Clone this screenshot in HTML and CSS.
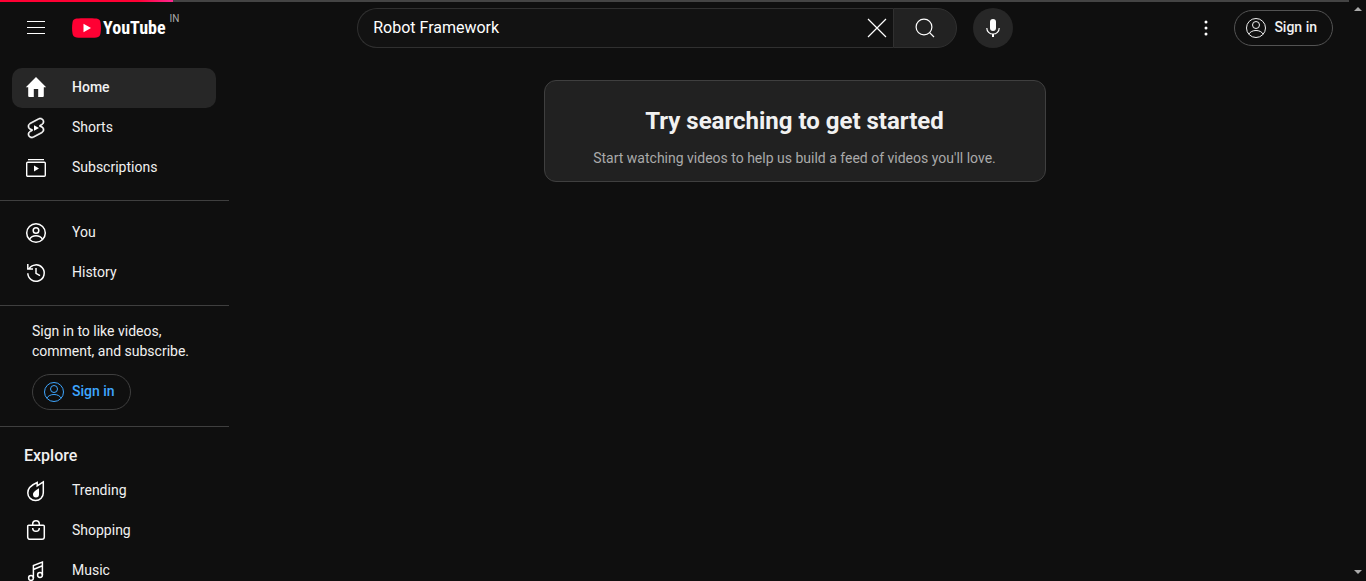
FILE: index.html
```html
<!DOCTYPE html>
<html lang="en">
<head>
<meta charset="utf-8">
<title>YouTube</title>
<link rel="stylesheet" href="styles.css">
</head>
<body>
<svg class="symbols" aria-hidden="true">
  <symbol id="person" viewBox="0 0 24 24"><g fill="none" stroke="currentColor"><circle cx="12" cy="12" r="9.5"/><circle cx="12" cy="9" r="3.5"/><path d="M4.8 18.2C6.2 15.700 8.900 14.500 12 14.500s5.800 1.200 7.200 3.700"/></g></symbol>
</svg>
<div class="progress"><div class="progress-value"></div></div>
<div class="page">
  <header class="masthead">
    <div class="start">
      <button class="icon-button" aria-label="Guide"><svg class="icon" viewBox="0 0 24 24"><path d="M21 6H3V5h18v1zm0 5H3v1h18v-1zm0 6H3v1h18v-1z"/></svg></button>
      <a class="logo" href="#"><svg class="logo-mark" viewBox="0 0 29 20"><path fill="#f03" d="M4.500.6C9 0 20 0 24.500.6c2.400.3 3.700 1.500 4 3.900.6 3.500.6 7.500 0 11-.3 2.400-1.600 3.600-4 3.900-4.500.6-15.500.6-20 0-2.400-.3-3.700-1.500-4-3.900-.6-3.500-.6-7.500 0-11C.8 2.100 2.100.9 4.500.6z"/><path fill="#fff" d="M11.500 5.700v8.600L19 10z"/></svg><span class="wordmark">YouTube</span><span class="country">IN</span></a>
    </div>
    <form class="search">
      <div class="search-box">
        <input class="search-input" type="text" aria-label="Search" value="Robot Framework">
        <button class="clear" type="button" aria-label="Clear"><svg class="icon" viewBox="0 0 24 24"><path fill="none" stroke="currentColor" stroke-width="1.200" d="M3 3l18 18M21 3 3 21"/></svg></button>
      </div>
      <button class="search-button" type="button" aria-label="Search"><svg class="icon" viewBox="0 0 24 24"><g fill="none" stroke="currentColor" stroke-width="1.200"><circle cx="11" cy="11" r="7.900"/><path d="M16.600 16.600 21 21"/></g></svg></button>
      <button class="mic" type="button" aria-label="Search with your voice"><svg class="icon" viewBox="0 0 24 24"><rect x="9" y="3" width="6" height="12" rx="3"/><path fill="none" stroke="currentColor" stroke-width="1.200" d="M5.800 12c0 3.500 2.700 6 6.200 6s6.200-2.500 6.200-6"/><path d="M11 18h2v3h-2z"/></svg></button>
    </form>
    <div class="end">
      <button class="icon-button" aria-label="Settings"><svg class="icon" viewBox="0 0 24 24"><circle cx="12" cy="6" r="1.500"/><circle cx="12" cy="12" r="1.500"/><circle cx="12" cy="18" r="1.500"/></svg></button>
      <a class="sign-in" href="#"><svg class="icon"><use href="#person"/></svg>Sign in</a>
    </div>
  </header>
  <div class="content">
    <nav class="guide">
      <div class="section">
        <a class="entry active" href="#"><svg class="icon" viewBox="0 0 24 24"><path d="M12 1 1.800 11.200h2.400V20a1 1 0 0 0 1 1h4.600v-8h4.400v8h4.600a1 1 0 0 0 1-1v-8.800h2.400z"/></svg>Home</a>
        <a class="entry" href="#"><svg class="icon" viewBox="0 0 24 24"><path d="M10 14.650v-5.300L15 12l-5 2.650z"/><path d="M17.770 10.320l-1.200-.5L18 9.060c1.840-.96 2.530-3.230 1.560-5.060s-3.240-2.530-5.070-1.560L6 6.940c-1.290.68-2.070 2.040-2 3.490.07 1.420.93 2.670 2.220 3.250.03.01 1.200.5 1.200.5L6 14.930c-1.830.97-2.530 3.240-1.560 5.070.97 1.830 3.240 2.530 5.070 1.560l8.500-4.500c1.290-.68 2.060-2.040 1.990-3.490-.07-1.420-.94-2.680-2.230-3.250zm-.23 5.860-8.500 4.500c-1.340.71-3.010.2-3.720-1.140-.71-1.340-.2-3.010 1.140-3.720l2.040-1.080v-1.210l-.69-.28-1.110-.46c-.99-.41-1.650-1.350-1.700-2.410-.05-1.060.52-2.060 1.460-2.560l8.500-4.500c1.340-.71 3.010-.2 3.720 1.140.71 1.340.2 3.010-1.140 3.720L15.500 9.260v1.210l1.800.74c.99.41 1.650 1.350 1.700 2.410.05 1.060-.52 2.060-1.460 2.560z" stroke="currentColor" stroke-width=".7"/></svg>Shorts</a>
        <a class="entry" href="#"><svg class="icon" viewBox="0 0 24 24"><path d="M4 3h16v1.200H4zM10 9.500v6l5-3z"/><rect x="2.700" y="6.200" width="18.600" height="14" rx="1" fill="none" stroke="currentColor" stroke-width="1.400"/></svg>Subscriptions</a>
      </div>
      <div class="section">
        <a class="entry" href="#"><svg class="icon" viewBox="0 0 24 24"><g fill="none" stroke="currentColor" stroke-width="1.500"><circle cx="12" cy="12" r="9.300"/><circle cx="12" cy="9.500" r="2.800"/><path d="M5.500 18.300c1.300-2.300 3.600-3.500 6.500-3.500s5.200 1.200 6.500 3.500"/></g></svg>You</a>
        <a class="entry" href="#"><svg class="icon" viewBox="0 0 24 24"><g fill="none" stroke="currentColor" stroke-width="1.500"><path d="M5 7.800A8.200 8.200 0 1 1 3.800 12.300M3.800 3v5h5.200M12 7v5.300l4 2.400"/></g></svg>History</a>
      </div>
      <div class="section promo">
        <p class="promo-text">Sign in to like videos, comment, and subscribe.</p>
        <a class="sign-in blue" href="#"><svg class="icon"><use href="#person"/></svg>Sign in</a>
      </div>
      <div class="section">
        <h3 class="section-title">Explore</h3>
        <a class="entry" href="#"><svg class="icon" viewBox="0 0 24 24"><path fill="none" stroke="currentColor" stroke-width="1.500" d="M19.300 2.800v10.900a7.700 7.700 0 0 1-15.500.2c0-4.500 3.200-7.800 9.400-10.400v3.300z"/><path d="M15 9.200v6.300a3 3 0 1 1-6 0c0-3 2.700-3.800 6-6.300z"/></svg>Trending</a>
        <a class="entry" href="#"><svg class="icon" viewBox="0 0 24 24"><g fill="none" stroke="currentColor" stroke-width="1.500"><path d="M4.700 6.300h14.600a1 1 0 0 1 1 1V18a2.300 2.300 0 0 1-2.300 2.300H6A2.300 2.300 0 0 1 3.700 18V7.300a1 1 0 0 1 1-1zM8.700 6V5a3.300 3.300 0 0 1 6.600 0v1M8.700 9a3.300 3.300 0 0 0 6.600 0"/></g></svg>Shopping</a>
        <a class="entry" href="#"><svg class="icon" viewBox="0 0 24 24"><g fill="none" stroke="currentColor" stroke-width="1.500"><circle cx="7" cy="19" r="2.400"/><circle cx="16" cy="16" r="2.400"/><path d="M9.400 19V6.500l9-3.500v13M9.400 10.500l9-3.700"/></g></svg>Music</a>
      </div>
    </nav>
    <main class="feed">
      <section class="nudge">
        <h1 class="nudge-title">Try searching to get started</h1>
        <p class="nudge-text">Start watching videos to help us build a feed of videos you'll love.</p>
      </section>
    </main>
  </div>
</div>
<div class="scrollbar" aria-hidden="true"><span class="arrow up"></span><span class="arrow down"></span></div>
</body>
</html>
```
FILE: styles.css
```css
* { box-sizing: border-box; }

body {
  margin: 0;
  height: 100vh;
  overflow: hidden;
  display: flex;
  background: #0f0f0f;
  color: #f1f1f1;
  font-family: Roboto, "Liberation Sans", sans-serif;
  font-size: 14px;
  line-height: 20px;
}

h1, h3, p { margin: 0; }
a { color: inherit; text-decoration: none; }

button {
  display: flex;
  align-items: center;
  justify-content: center;
  padding: 0;
  border: 0;
  background: none;
  color: #fff;
}

.symbols { position: absolute; width: 0; height: 0; }
.icon { width: 24px; height: 24px; flex: none; fill: currentColor; color: inherit; }

.progress {
  position: absolute;
  top: 0;
  left: 0;
  right: 17px;
  height: 2px;
  background: #444;
}
.progress-value {
  width: 173px;
  height: 2px;
  background: linear-gradient(to right, #f03 80%, #ff2791 100%);
}

.page { flex: 1; min-width: 0; display: flex; flex-direction: column; }

.masthead {
  flex: none;
  height: 56px;
  padding: 0 16px;
  display: flex;
  align-items: center;
  justify-content: space-between;
}
.start, .end { display: flex; align-items: center; }
.start { width: 168px; }
.icon-button { flex: none; width: 40px; height: 40px; }

.logo { display: flex; align-items: center; padding-left: 16px; gap: 2px; }
.logo-mark { width: 29px; height: 20px; flex: none; }
.wordmark {
  font-family: "Roboto Condensed", "Liberation Sans Narrow", Roboto, sans-serif;
  font-size: 18px;
  font-weight: 700;
  color: #fff;
}
.country { align-self: flex-start; font-size: 10px; line-height: 10px; color: #aaa; margin: -4px 0 0 2px; }

.search { display: flex; width: 656px; height: 40px; margin: 0; }
.search-box {
  flex: 1;
  min-width: 0;
  display: flex;
  align-items: center;
  padding: 0 4px 0 15px;
  border: 1px solid #303030;
  border-right: 0;
  border-radius: 20px 0 0 20px;
  background: #121212;
}
.search-input {
  flex: 1;
  min-width: 0;
  padding: 0;
  border: 0;
  outline: 0;
  background: none;
  color: #fff;
  font: 16px/24px Roboto, "Liberation Sans", sans-serif;
}
.clear { width: 24px; height: 24px; }
.search-button {
  width: 64px;
  border: 1px solid #303030;
  border-radius: 0 20px 20px 0;
  background: #222;
}
.mic { width: 40px; height: 40px; margin-left: 16px; border-radius: 50%; background: #272727; }

.end { gap: 8px; }
.sign-in {
  display: flex;
  align-items: flex-start;
  gap: 6px;
  width: fit-content;
  padding: 5px 15px 5px 9px;
  border: 1px solid #535353;
  border-radius: 18px;
  font-weight: 500;
  line-height: 22px;
}
.blue { color: #3ea6ff; border-color: #3f3f3f; }

.content { flex: 1; min-height: 0; display: flex; }

.guide { flex: none; width: 240px; padding-right: 11px; overflow: hidden; }
.section { padding: 12px 13px 12px 12px; border-bottom: 1px solid #3f3f3f; }
.entry {
  display: flex;
  align-items: flex-start;
  gap: 24px;
  padding: 8px 12px;
  border-radius: 10px;
  line-height: 22px;
}
.entry .icon { color: #fff; }
.active { background: #272727; font-weight: 500; }
.promo { padding: 15px 32px 16px; }
.promo-text { margin-bottom: 13px; }
.section-title {
  padding: 6px 12px 4px;
  font-size: 16px;
  font-weight: 500;
  line-height: 22px;
}

.feed { flex: 1; padding: 24px; }
.nudge {
  max-width: 502px;
  margin: 0 auto;
  padding: 24px 24px 13px;
  border: 1px solid #3f3f3f;
  border-radius: 12px;
  background: #212121;
  text-align: center;
}
.nudge-title { margin-bottom: 11px; font-size: 24px; font-weight: 700; line-height: 32px; }
.nudge-text { color: #aaa; }

.scrollbar {
  flex: none;
  width: 17px;
  padding: 7px 0;
  display: flex;
  flex-direction: column;
  justify-content: space-between;
  align-items: center;
}
.arrow { border: 4px solid transparent; }
.up { border-top: 0; border-bottom-color: #aaa; }
.down { border-bottom: 0; border-top-color: #aaa; }
```
